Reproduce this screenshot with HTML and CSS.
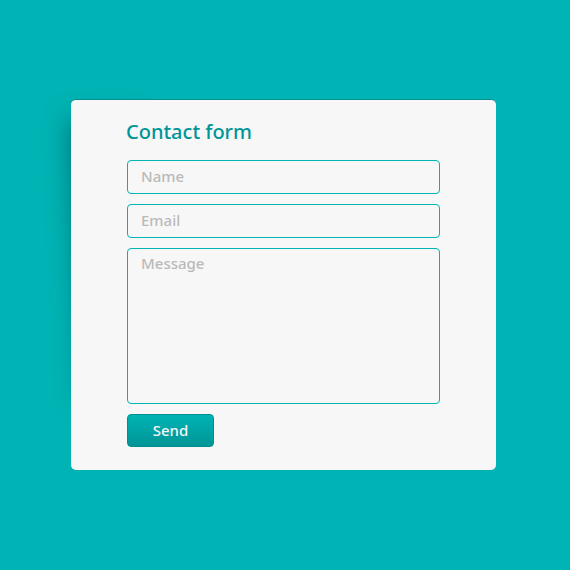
FILE: index.html
```html
<!DOCTYPE html>
<html lang="en">
<head>
<meta charset="utf-8">
<meta name="viewport" content="width=device-width, initial-scale=1">
<title>Contact form</title>
<link rel="stylesheet" href="styles.css">
</head>
<body>
<main class="card">
  <form class="form">
    <h1 class="title">Contact form</h1>
    <input class="field" type="text" name="name" placeholder="Name" aria-label="Name">
    <input class="field" type="email" name="email" placeholder="Email" aria-label="Email">
    <textarea class="field message" name="message" placeholder="Message" aria-label="Message"></textarea>
    <button class="send" type="submit">Send</button>
  </form>
</main>
</body>
</html>
```

FILE: styles.css
```css
* {
  box-sizing: border-box;
}

body {
  display: flex;
  align-items: center;
  justify-content: center;
  min-height: 100vh;
  margin: 0;
  padding: 0 3px 1px 0;
  background: #00b3b4;
  font-family: "Noto Sans", "Open Sans", sans-serif;
}

.card {
  position: relative;
  z-index: 0;
  width: 100%;
  max-width: 425px;
}

/* Soft shadow leaning out from behind the left edge */
.card::before {
  content: "";
  position: absolute;
  z-index: -1;
  top: 24px;
  bottom: 76px;
  left: 10px;
  width: 12%;
  background: #006e70;
  box-shadow: 0 0 26px 4px #006e70;
  transform: rotate(-3deg);
}

.form {
  display: flex;
  flex-direction: column;
  gap: 10px;
  padding: 18px 56px 23px;
  border-top: 1px solid #078f91;
  border-radius: 5px;
  background: #f7f7f7;
}

.title {
  margin: 0 0 4px;
  color: #009597;
  font-size: 20px;
  font-weight: 500;
  line-height: 28px;
  text-indent: -1px;
}

.field {
  display: block;
  width: 100%;
  height: 34px;
  margin: 0;
  padding: 0 13px 2px;
  border: 1px solid #00b3b4;
  border-radius: 4px;
  background: transparent;
  color: #555;
  font: 500 15px/20px "Noto Sans", "Open Sans", sans-serif;
}

.field::placeholder {
  color: #bababa;
  opacity: 1;
}

.message {
  height: 156px;
  padding-top: 4px;
  resize: none;
}

.send {
  align-self: flex-start;
  width: 87px;
  height: 33px;
  padding: 0 0 2px;
  border: 1px solid #008f91;
  border-radius: 4px;
  background: linear-gradient(#00b3b4, #009597);
  color: #f7f7f7;
  font: 500 15px/20px "Noto Sans", "Open Sans", sans-serif;
}
```
